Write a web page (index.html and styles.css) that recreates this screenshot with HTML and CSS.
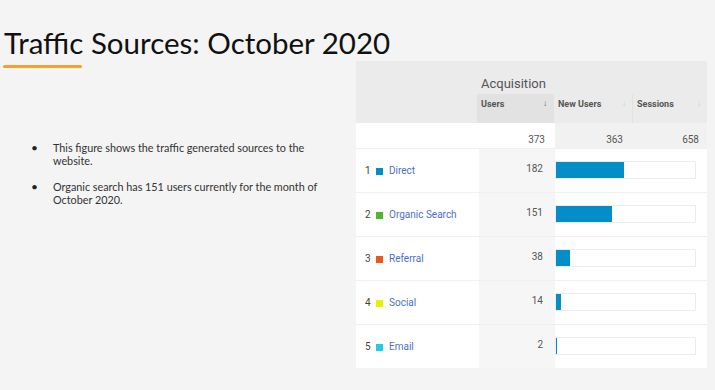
FILE: index.html
```html
<!DOCTYPE html>
<html lang="en">
<head>
  <meta charset="UTF-8">
  <title>Traffic Sources: October 2020</title>
  <link rel="stylesheet" href="styles.css">
</head>
<body>
  <div class="slide">
    <div class="left">
      <h1 class="title">Traffic Sources: October 2020</h1>
      <div class="underline"></div>
      <ul class="points">
        <li><span>This figure shows the traffic generated sources to the<br>website.</span></li>
        <li><span>Organic search has 151 users currently for the month of<br>October 2020.</span></li>
      </ul>
    </div>

    <div class="report">
      <div class="head">
        <div class="head-blank"></div>
        <div class="head-group">
          <div class="group-name">Acquisition</div>
          <div class="cols">
            <div class="col sorted">Users <span class="arrow">&#8595;</span></div>
            <div class="col">New Users <span class="arrow light">&#8595;</span></div>
            <div class="col">Sessions <span class="arrow light">&#8595;</span></div>
          </div>
        </div>
      </div>

      <div class="totals">
        <div class="t-blank"></div>
        <div class="t-users">373</div>
        <div class="t-new">363</div>
        <div class="t-sessions">658</div>
      </div>

      <div class="row">
        <div class="source"><span class="num">1</span><span class="sq" style="background:#058dc7"></span><span class="name">Direct</span></div>
        <div class="users">182</div>
        <div class="barcell"><div class="track"><div class="bar" style="width:48.8%"></div></div></div>
      </div>
      <div class="row">
        <div class="source"><span class="num">2</span><span class="sq" style="background:#50b432"></span><span class="name">Organic Search</span></div>
        <div class="users">151</div>
        <div class="barcell"><div class="track"><div class="bar" style="width:40.5%"></div></div></div>
      </div>
      <div class="row">
        <div class="source"><span class="num">3</span><span class="sq" style="background:#ed561b"></span><span class="name">Referral</span></div>
        <div class="users">38</div>
        <div class="barcell"><div class="track"><div class="bar" style="width:10.2%"></div></div></div>
      </div>
      <div class="row">
        <div class="source"><span class="num">4</span><span class="sq" style="background:#edef00"></span><span class="name">Social</span></div>
        <div class="users">14</div>
        <div class="barcell"><div class="track"><div class="bar" style="width:3.8%"></div></div></div>
      </div>
      <div class="row">
        <div class="source"><span class="num">5</span><span class="sq" style="background:#24cbe5"></span><span class="name">Email</span></div>
        <div class="users">2</div>
        <div class="barcell"><div class="track"><div class="bar" style="width:1px"></div></div></div>
      </div>
    </div>
  </div>
</body>
</html>
```

FILE: styles.css
```css
body {
  margin: 0;
  background-color: #f4f4f4;
  font-family: Lato, "Open Sans", sans-serif;
  color: #222;
}
.slide {
  display: grid;
  grid-template-columns: 356px 351px;
  height: 390px;
}
.left {
  padding-top: 25px;
}
.title {
  margin: 0 0 0 4px;
  font-size: 29.5px;
  font-weight: normal;
  line-height: 36px;
  white-space: nowrap;
  color: #111;
}
.underline {
  width: 79px;
  height: 3px;
  margin: 4px 0 0 3px;
  background-color: #f0a22e;
  border-radius: 2px;
}
.points {
  margin: 73px 0 0 0;
  padding: 0 0 0 31px;
  list-style: none;
  font-size: 10.8px;
  line-height: 13px;
  color: #333;
  white-space: nowrap;
}
.points li {
  display: flex;
  margin-bottom: 13px;
}
.points li::before {
  content: "\2022";
  flex: none;
  width: 22px;
  font-size: 12px;
  color: #222;
}

/* report panel */
.report {
  margin-top: 61px;
  height: 307px;
  background-color: #f7f7f7;
  font-family: Roboto, Arial, sans-serif;
  font-size: 10px;
  color: #555;
}
.head {
  display: flex;
  height: 62px;
  background-color: #ebebeb;
}
.head-blank {
  width: 123px;
}
.head-group {
  flex: 1;
  display: flex;
  flex-direction: column;
}
.group-name {
  height: 33px;
  padding-left: 4px;
  font-size: 13px;
  line-height: 46px;
  color: #555;
}
.cols {
  flex: 1;
  display: flex;
}
.col {
  display: flex;
  justify-content: space-between;
  padding: 5px 6px 0 4px;
  font-size: 9px;
  font-weight: bold;
  color: #555;
  border-right: 1px solid #e2e2e2;
}
.col:nth-child(1) {
  width: 66px;
  background-color: #e2e2e2;
}
.col:nth-child(2) {
  width: 68px;
}
.col:nth-child(3) {
  width: 64px;
  border-right: none;
}
.arrow {
  font-size: 8px;
  color: #555;
}
.arrow.light {
  color: #c8c8c8;
}
.totals {
  display: flex;
  height: 25px;
  line-height: 34px;
  text-align: right;
}
.t-blank {
  width: 123px;
  background-color: #fff;
}
.t-users {
  width: 66px;
  padding-right: 10px;
  background-color: #fff;
}
.t-new {
  width: 68px;
  padding-right: 10px;
  background-color: #f1f1f1;
}
.t-sessions {
  width: 66px;
  padding-right: 8px;
  background-color: #f1f1f1;
}
.row {
  display: flex;
  height: 44px;
  border-top: 1px solid #f0f0f0;
  box-sizing: border-box;
}
.source {
  width: 123px;
  display: flex;
  align-items: center;
  padding-left: 9px;
  box-sizing: border-box;
  background-color: #fff;
}
.num {
  width: 11px;
  color: #444;
}
.sq {
  width: 7px;
  height: 7px;
  margin: 2px 6px 0 0;
}
.name {
  color: #4d6fc9;
}
.users {
  width: 76px;
  padding-right: 12px;
  box-sizing: border-box;
  text-align: right;
  line-height: 40px;
  background-color: #f6f6f6;
}
.barcell {
  width: 152px;
  display: flex;
  align-items: center;
  background-color: #fff;
}
.track {
  width: 141px;
  height: 18px;
  margin-top: -2px;
  border: 1px solid #ececec;
  box-sizing: border-box;
  background-color: #fff;
}
.bar {
  height: 100%;
  background-color: #058dc7;
}
```
